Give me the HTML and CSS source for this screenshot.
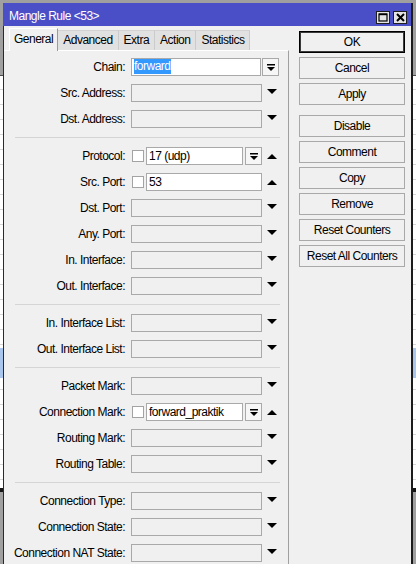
FILE: index.html
```html
<!DOCTYPE html>
<html lang="en">
<head>
<meta charset="utf-8">
<title>Mangle Rule &lt;53&gt;</title>
<link rel="stylesheet" href="styles.css">
</head>
<body>
<div class="desktop">
  <div class="strip"></div>
  <div class="window">
    <div class="titlebar">
      <span class="title">Mangle Rule &lt;53&gt;</span>
      <div class="tbtns">
        <span class="tbtn"><svg width="10" height="9" viewBox="0 0 10 9"><rect x="1" y="1" width="8" height="7" fill="none" stroke="#000" stroke-width="1.2"/><rect x="1" y="0.6" width="8" height="1.6" fill="#000"/></svg></span>
        <span class="tbtn"><svg width="9" height="9" viewBox="0 0 9 9"><path d="M1 1 L8 8 M8 1 L1 8" stroke="#000" stroke-width="2"/></svg></span>
      </div>
    </div>
    <div class="wbody">
      <div class="main">
        <div class="tabs">
          <span class="tab active">General</span>
          <span class="tab">Advanced</span>
          <span class="tab">Extra</span>
          <span class="tab">Action</span>
          <span class="tab">Statistics</span>
        </div>
        <div class="panel">
          <div class="row"><span class="lbl">Chain:</span><span class="field on chain"><span class="sel">forward</span></span><span class="ddbtn"><svg width="8" height="7" viewBox="0 0 8 7"><rect x="0" y="0" width="8" height="1.5" fill="#000"/><polygon points="0,3 8,3 4,7" fill="#000"/></svg></span></div>
          <div class="row"><span class="lbl">Src. Address:</span><span class="field"></span><span class="arrow down"></span></div>
          <div class="row"><span class="lbl">Dst. Address:</span><span class="field"></span><span class="arrow down"></span></div>
          <div class="sep"></div>
          <div class="row"><span class="lbl">Protocol:</span><span class="cb"></span><span class="field on short">17 (udp)</span><span class="ddbtn wide"><svg width="8" height="7" viewBox="0 0 8 7"><rect x="0" y="0" width="8" height="1.5" fill="#000"/><polygon points="0,3 8,3 4,7" fill="#000"/></svg></span><span class="arrow up"></span></div>
          <div class="row"><span class="lbl">Src. Port:</span><span class="cb"></span><span class="field on mid">53</span><span class="arrow up"></span></div>
          <div class="row"><span class="lbl">Dst. Port:</span><span class="field"></span><span class="arrow down"></span></div>
          <div class="row"><span class="lbl">Any. Port:</span><span class="field"></span><span class="arrow down"></span></div>
          <div class="row"><span class="lbl">In. Interface:</span><span class="field"></span><span class="arrow down"></span></div>
          <div class="row"><span class="lbl">Out. Interface:</span><span class="field"></span><span class="arrow down"></span></div>
          <div class="sep"></div>
          <div class="row"><span class="lbl">In. Interface List:</span><span class="field"></span><span class="arrow down"></span></div>
          <div class="row"><span class="lbl">Out. Interface List:</span><span class="field"></span><span class="arrow down"></span></div>
          <div class="sep"></div>
          <div class="row"><span class="lbl">Packet Mark:</span><span class="field"></span><span class="arrow down"></span></div>
          <div class="row"><span class="lbl">Connection Mark:</span><span class="cb"></span><span class="field on short">forward_praktik</span><span class="ddbtn wide"><svg width="8" height="7" viewBox="0 0 8 7"><rect x="0" y="0" width="8" height="1.5" fill="#000"/><polygon points="0,3 8,3 4,7" fill="#000"/></svg></span><span class="arrow up"></span></div>
          <div class="row"><span class="lbl">Routing Mark:</span><span class="field"></span><span class="arrow down"></span></div>
          <div class="row"><span class="lbl">Routing Table:</span><span class="field"></span><span class="arrow down"></span></div>
          <div class="sep"></div>
          <div class="row"><span class="lbl">Connection Type:</span><span class="field"></span><span class="arrow down"></span></div>
          <div class="row"><span class="lbl">Connection State:</span><span class="field"></span><span class="arrow down"></span></div>
          <div class="row"><span class="lbl">Connection NAT State:</span><span class="field"></span><span class="arrow down"></span></div>
        </div>
      </div>
      <div class="actions">
        <span class="btn default">OK</span>
        <span class="btn">Cancel</span>
        <span class="btn">Apply</span>
        <span class="btn spaced">Disable</span>
        <span class="btn">Comment</span>
        <span class="btn">Copy</span>
        <span class="btn">Remove</span>
        <span class="btn">Reset Counters</span>
        <span class="btn">Reset All Counters</span>
      </div>
    </div>
  </div>
  <div class="strip strip-right"></div>
</div>
</body>
</html>
```
FILE: styles.css
```css
* { box-sizing: border-box; }
html, body { margin: 0; padding: 0; }
body {
  background: #9f9f9f;
  font-family: "Liberation Sans", Arial, sans-serif;
  font-size: 12px;
  letter-spacing: -0.5px;
  color: #000;
  overflow: hidden;
}
.desktop { display: flex; height: 564px; }

.strip {
  width: 3px;
  flex: none;
  background:
    linear-gradient(to bottom, #a0a0a0 0 75px, #4a4a4a 75px 76px, transparent 76px 348px, #a9c6ee 348px 378px, transparent 378px 488px, #151515 488px 492px, #a0a0a0 492px),
    repeating-linear-gradient(to bottom, #fff 0 14px, #d6d6d6 14px 15px);
}
.strip-right { flex: 1; }

.window {
  width: 410px;
  flex: none;
  margin-top: 3px;
  height: 561px;
  display: flex;
  flex-direction: column;
  border-right: 2px solid #1c1c1c;
  background: #f0f0f0;
  overflow: hidden;
}
.titlebar {
  height: 23px;
  flex: none;
  background: #4b4fc7;
  color: #fff;
  display: flex;
  align-items: flex-start;
  padding: 3px 4px 0 6px;
  line-height: 20px;
}
.title { flex: 1; }
.tbtns { display: flex; gap: 3px; margin-top: 5px; }
.tbtn {
  width: 14px;
  height: 13px;
  border: 1px solid #1e1e1e;
  background: #e4e4e4;
  display: flex;
  align-items: center;
  justify-content: center;
}

.wbody {
  flex: 1;
  display: flex;
  border-left: 1px solid #2a2a2a;
  min-height: 0;
}
.main {
  width: 285px;
  flex: none;
  display: flex;
  flex-direction: column;
  padding-top: 2px;
}
.tabs {
  display: flex;
  align-items: flex-end;
  padding-left: 5px;
  height: 22px;
  flex: none;
}
.tab {
  height: 20px;
  line-height: 19px;
  padding: 0 5px;
  background: #e1e1e1;
  border-top: 1px solid #d2d2d2;
  border-right: 1px solid #cbcbcb;
  white-space: nowrap;
}
.tab.active {
  height: 23px;
  margin-bottom: -1px;
  position: relative;
  z-index: 1;
  background: #f0f0f0;
  border-left: 1px solid #fff;
  border-top: 1px solid #fff;
  border-right: 1px solid #9a9a9a;
  padding: 0 4px;
  line-height: 20px;
}
.panel {
  flex: 1;
  border-top: 1px solid #fff;
  border-right: 1px solid #a0a0a0;
  padding-top: 3px;
}
.row {
  display: flex;
  align-items: center;
  height: 26px;
}
.lbl {
  width: 121px;
  margin-right: 6px;
  text-align: right;
  white-space: nowrap;
}
.field {
  width: 131px;
  height: 18px;
  border: 1px solid #a9a9a9;
  background: #f0f0f0;
  line-height: 16px;
  padding-left: 2px;
  white-space: nowrap;
  overflow: hidden;
}
.field.on { background: #fff; }
.field.chain { width: 130px; }
.field.short { width: 97px; }
.field.mid { width: 116px; }
.sel {
  display: inline-block;
  vertical-align: top;
  background: #3399ff;
  color: #fff;
  line-height: 15px;
}
.cb {
  width: 12px;
  height: 12px;
  border: 1px solid #a3a3a3;
  background: #fff;
  margin-left: 1px;
  margin-right: 2px;
  flex: none;
}
.ddbtn {
  width: 17px;
  height: 18px;
  border: 1px solid #a9a9a9;
  background: #f6f6f6;
  display: flex;
  align-items: center;
  justify-content: center;
  margin-left: 1px;
}
.ddbtn.wide { margin-left: 2px; }
.arrow {
  width: 19px;
  height: 18px;
  display: flex;
  align-items: center;
  justify-content: center;
}
.arrow::before {
  content: "";
  border-left: 5px solid transparent;
  border-right: 5px solid transparent;
}
.arrow.down::before { border-top: 5px solid #000; margin-top: -3px; }
.arrow.up::before { border-bottom: 5px solid #000; margin-top: 1px; }
.sep {
  height: 1px;
  background: #d5d5d5;
  margin: 5px 8px 5px 11px;
}

.actions {
  display: flex;
  flex-direction: column;
  padding: 5px 0 0 10px;
}
.btn {
  width: 106px;
  height: 22px;
  border: 1px solid #a9a9a9;
  background: #f0f0f0;
  display: flex;
  align-items: center;
  justify-content: center;
  margin-bottom: 4px;
  white-space: nowrap;
}
.btn.default {
  border: 1px solid #000;
  box-shadow: inset 0 0 0 1px #3a3a3a;
}
.btn.spaced { margin-top: 6px; }
```
